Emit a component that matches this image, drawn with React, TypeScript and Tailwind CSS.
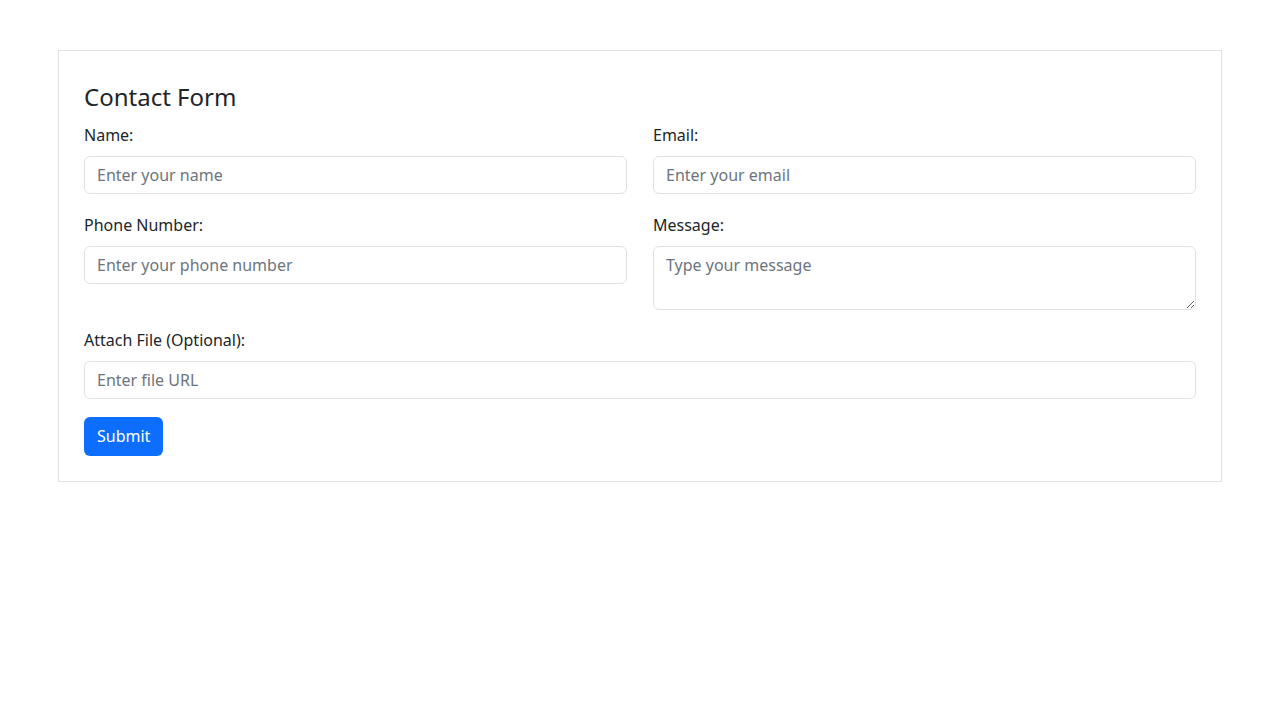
import { useState } from "react";

export default function App() {
  const [form, setForm] = useState({
    name: "",
    email: "",
    phone: "",
    message: "",
    file: "",
  });

  const update = (key: string) => (e: any) =>
    setForm({ ...form, [key]: e.target.value });

  const inputClass =
    "block w-full h-[38px] px-[12px] rounded-[6px] border border-[#dee2e6] bg-white text-[16px] text-[#212529] placeholder:text-[#6c757d] outline-none";

  return (
    <div
      className="min-h-screen bg-white text-[#212529] px-[58px] pt-[50px]"
      style={{ fontFamily: '"Noto Sans", "Open Sans", sans-serif' }}
    >
      <div className="border border-[#dee2e6] px-[25px] pt-[32px] pb-[25px]">
        <h3 className="text-[24px] leading-[1.2] mb-[11px] text-[#212529]">
          Contact Form
        </h3>
        <form onSubmit={(e) => e.preventDefault()}>
          <div className="grid grid-cols-2 gap-x-[26px] gap-y-[19px]">
            <div>
              <label className="block text-[16px] leading-[24px] mb-[9px]">Name:</label>
              <input
                className={inputClass}
                placeholder="Enter your name"
                value={form.name}
                onChange={update("name")}
              />
            </div>
            <div>
              <label className="block text-[16px] leading-[24px] mb-[9px]">Email:</label>
              <input
                className={inputClass}
                placeholder="Enter your email"
                value={form.email}
                onChange={update("email")}
              />
            </div>
            <div>
              <label className="block text-[16px] leading-[24px] mb-[9px]">Phone Number:</label>
              <input
                className={inputClass}
                placeholder="Enter your phone number"
                value={form.phone}
                onChange={update("phone")}
              />
            </div>
            <div>
              <label className="block text-[16px] leading-[24px] mb-[9px]">Message:</label>
              <textarea
                className="block w-full h-[64px] px-[12px] py-[6px] rounded-[6px] border border-[#dee2e6] bg-white text-[16px] leading-[24px] text-[#212529] placeholder:text-[#6c757d] outline-none"
                placeholder="Type your message"
                value={form.message}
                onChange={update("message")}
              />
            </div>
          </div>
          <div className="mt-[18px]">
            <label className="block text-[16px] leading-[24px] mb-[9px]">Attach File (Optional):</label>
            <input
              className={inputClass}
              placeholder="Enter file URL"
              value={form.file}
              onChange={update("file")}
            />
          </div>
          <button
            type="submit"
            className="mt-[18px] h-[39px] px-[13px] rounded-[6px] bg-[#0d6efd] text-white text-[16px]"
          >
            Submit
          </button>
        </form>
      </div>
    </div>
  );
}
